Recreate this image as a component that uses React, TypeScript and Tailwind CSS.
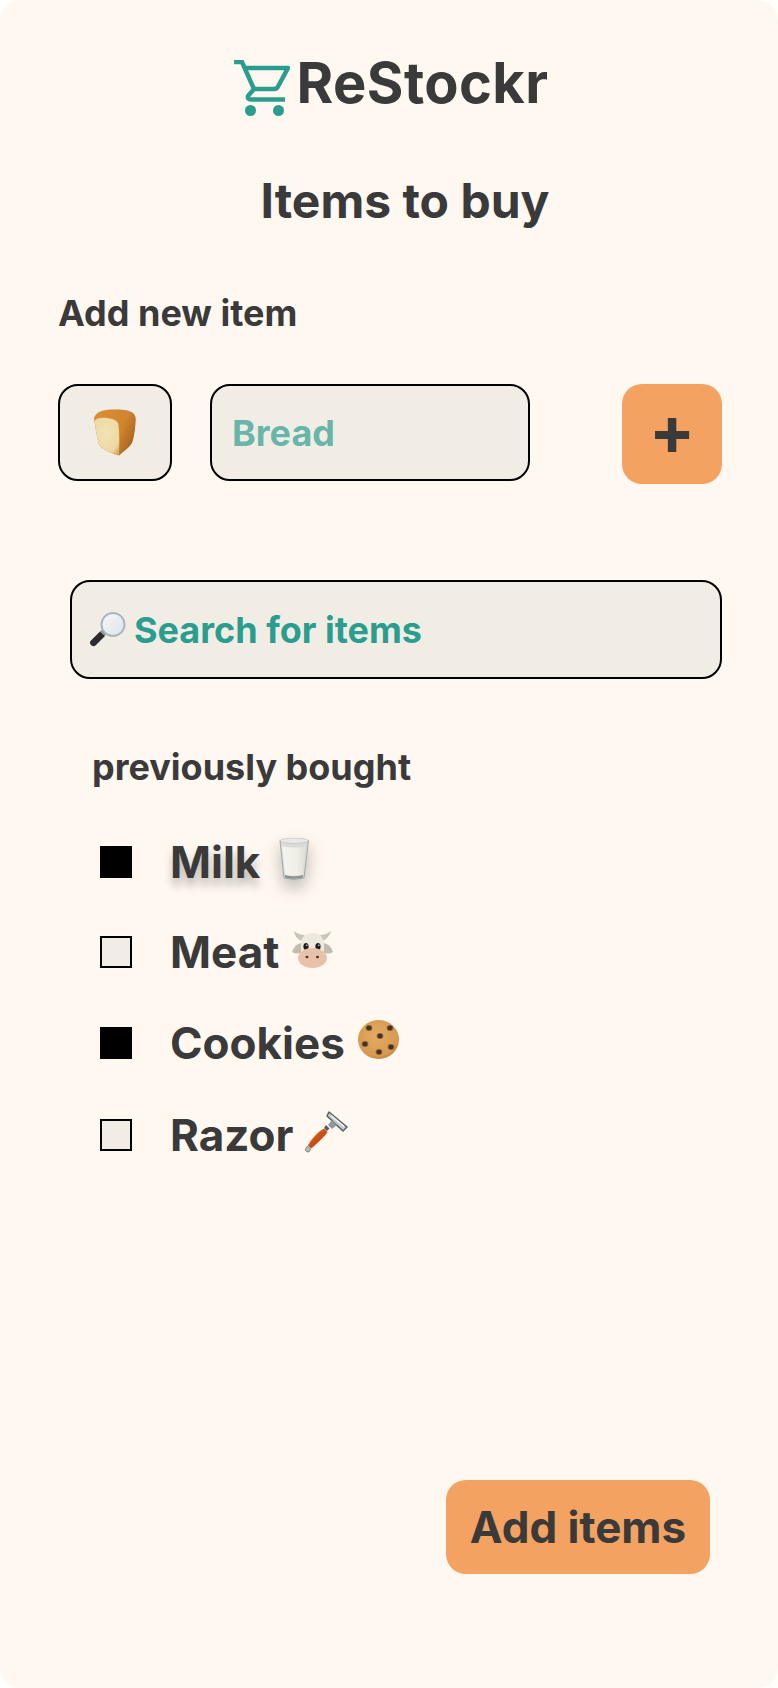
import React from 'react';

const inter = { fontFamily: 'Inter, "Liberation Sans", sans-serif' };

function CartLogo() {
  return (
    <svg width="56" height="56" viewBox="17 20 56 56" fill="none" className="shrink-0">
      <path d="M17 22H25L37 49" stroke="#2A9D8F" strokeWidth="4.5" />
      <path d="M28 28H71L61 46.5Q60 49 57 49H37L31 56Q30 59.5 34 59.5H68" stroke="#2A9D8F" strokeWidth="4.5" strokeLinejoin="round" />
      <circle cx="33.5" cy="70.5" r="5.5" fill="#2A9D8F" />
      <circle cx="61.5" cy="70.5" r="5.5" fill="#2A9D8F" />
    </svg>
  );
}

function BreadEmoji() {
  return (
    <svg width="42" height="47" viewBox="9 10 42 47" className="shrink-0">
      <defs>
        <linearGradient id="crust" x1="0" y1="0" x2="1" y2="0.5">
          <stop offset="0" stopColor="#DB8F38" />
          <stop offset="0.7" stopColor="#D0842E" />
          <stop offset="1" stopColor="#AD6820" />
        </linearGradient>
        <radialGradient id="crumb" cx="0.45" cy="0.4" r="0.7">
          <stop offset="0" stopColor="#F3E3B6" />
          <stop offset="0.8" stopColor="#ECD8A2" />
          <stop offset="1" stopColor="#D9AF6B" />
        </radialGradient>
      </defs>
      <path d="M9 19C11 13 17 11 26 10.500C36 10 47 11 49 15C51 18 51 20 50.500 24C50 31 49 39 47 44C44 49 38 53 34 56.500C25 54 17 50 14 46C12 38 10 27 9 19Z" fill="url(#crust)" />
      <path d="M9.500 22C11 19 16 18 22 19C28 20 33 21 33.500 26C34.500 34 34.500 46 34 56C25 54 17 50 14 46C12 38 10.500 29 9.500 22Z" fill="url(#crumb)" />
    </svg>
  );
}

function SearchEmoji() {
  return (
    <svg width="37" height="35" viewBox="0 0 37 35" className="shrink-0">
      <defs>
        <linearGradient id="lens" x1="0" y1="0" x2="1" y2="1">
          <stop offset="0" stopColor="#F8F8F8" />
          <stop offset="1" stopColor="#DCE3E6" />
        </linearGradient>
      </defs>
      <path d="M1.5 29L11 19.5L16 24L6.5 33.5Q4.5 35 2.5 33.5Q0 31 1.5 29Z" fill="#2C2C2E" />
      <path d="M11 19.5L14 17L18 21L16 24Z" fill="#8A8D90" />
      <circle cx="24" cy="12.5" r="11.5" fill="url(#lens)" stroke="#A9B6BF" strokeWidth="2" />
    </svg>
  );
}

function MilkEmoji() {
  return (
    <svg width="30" height="42" viewBox="7 6 30 42" className="shrink-0">
      <defs>
        <linearGradient id="milk" x1="0" y1="0" x2="1" y2="0">
          <stop offset="0" stopColor="#F4F3EC" />
          <stop offset="0.6" stopColor="#F0EFE8" />
          <stop offset="1" stopColor="#D9D9D2" />
        </linearGradient>
      </defs>
      <path d="M8 8.500L12 46Q22 49 32 46L36.500 8.500Z" fill="#D9DBD8" stroke="#A4A8A5" strokeWidth="1" />
      <path d="M10 14Q22 17 34.500 14L31 42.500Q22 45 13 42.500Z" fill="url(#milk)" />
      <path d="M13 43Q22 45.500 31 43L31 45.500Q22 48 13 45.500Z" fill="#8F9390" />
      <ellipse cx="22.200" cy="8.800" rx="14" ry="2.600" fill="#E9EAE8" stroke="#BEC1BE" strokeWidth="0.700" />
    </svg>
  );
}

function CowEmoji() {
  return (
    <svg width="41" height="37" viewBox="6 6 41 37" className="shrink-0">
      <path d="M8 6Q13 10 19 10L15 16Q9 13 8 6Z" fill="#C9C5B8" />
      <path d="M45 6Q40 10 34 10L37 16Q43 13 45 6Z" fill="#C9C5B8" />
      <path d="M6 27Q9 18 17 18L17 27Q11 30 6 27Z" fill="#C2BCAE" />
      <path d="M47 27Q44 18 36 18L36 27Q42 30 47 27Z" fill="#C2BCAE" />
      <path d="M15 21C15 12 19 8 26.500 8C34 8 38 12 38 21L38 38H15Z" fill="#ECE9DF" />
      <ellipse cx="20" cy="21.500" rx="2.600" ry="3.600" fill="#1E1B1A" />
      <ellipse cx="32" cy="21.500" rx="2.600" ry="3.600" fill="#1E1B1A" />
      <circle cx="20.800" cy="20.300" r="0.800" fill="#F4F4F4" />
      <circle cx="32.800" cy="20.300" r="0.800" fill="#F4F4F4" />
      <ellipse cx="26.500" cy="33" rx="14.500" ry="10" fill="#E7C1A9" />
      <ellipse cx="21" cy="32" rx="1.500" ry="1.200" fill="#4A322A" />
      <ellipse cx="31.500" cy="32" rx="1.500" ry="1.200" fill="#4A322A" />
    </svg>
  );
}

function CookieEmoji() {
  const chips = [
    [16, 13], [37, 13], [27, 21], [12, 29], [38, 32], [26, 37],
  ];
  return (
    <svg width="41" height="39" viewBox="5 5 41 39" className="shrink-0">
      <defs>
        <radialGradient id="dough" cx="0.45" cy="0.4" r="0.65">
          <stop offset="0" stopColor="#E3AD63" />
          <stop offset="0.8" stopColor="#D6994F" />
          <stop offset="1" stopColor="#BB7C33" />
        </radialGradient>
      </defs>
      <ellipse cx="25.500" cy="24.500" rx="20.500" ry="19.500" fill="url(#dough)" />
      {chips.map(([cx, cy]) => (
        <g key={`${cx}-${cy}`}>
          <ellipse cx={cx} cy={cy} rx="3.400" ry="3" fill="#8E6740" />
          <ellipse cx={cx} cy={cy} rx="2.500" ry="2.200" fill="#43312A" />
        </g>
      ))}
    </svg>
  );
}

function RazorEmoji() {
  return (
    <svg width="43" height="42" viewBox="5 5 43 42" className="shrink-0">
      <defs>
        <linearGradient id="handle" x1="0" y1="0" x2="1" y2="1">
          <stop offset="0" stopColor="#E8671F" />
          <stop offset="1" stopColor="#A83A0C" />
        </linearGradient>
      </defs>
      <path d="M29 6L47 21L43 25L27 10Z" fill="#C6CDCE" stroke="#566064" strokeWidth="1.500" strokeLinejoin="round" />
      <path d="M31 9.500L44 20.500" stroke="#F0F3F3" strokeWidth="1.500" />
      <path d="M32 14L37 19L32 23L28 19Z" fill="#8F989A" />
      <path d="M26 19L29.500 22.500L27 25L24 22Z" fill="#59595A" />
      <path d="M24 22.500L27.500 26C25 30 17 38 11 42.500L8 39.500C11 33 19 25 24 22.500Z" fill="url(#handle)" />
      <path d="M7.500 40L10.500 43L9 46Q6.500 46 5.500 44.500Q5 42.500 7.500 40Z" fill="#B9BFC0" stroke="#5F6669" strokeWidth="0.700" />
    </svg>
  );
}

const items = [
  { name: 'Milk', checked: true, shadow: true, emoji: <MilkEmoji />, gap: 'ml-[19px]', row: 'h-[90px]' },
  { name: 'Meat', checked: false, shadow: false, emoji: <CowEmoji />, gap: 'ml-[13px]', row: 'h-[90px]' },
  { name: 'Cookies', checked: true, shadow: false, emoji: <CookieEmoji />, gap: 'ml-[13px]', row: 'h-[91px]' },
  { name: 'Razor', checked: false, shadow: false, emoji: <RazorEmoji />, gap: 'ml-[12px]', row: 'h-[93px]' },
];

export default function App() {
  return (
    <div className="flex h-[1688px] w-[778px] flex-col overflow-hidden rounded-[20px] bg-[#FFF8F1] text-[#3A3A3A]" style={inter}>
      <div className="mt-[59px] flex items-center justify-center gap-[7px] pl-[4px]">
        <CartLogo />
        <h1 className="-mt-[10px] text-[56px] leading-[68px] font-bold tracking-[0.4px]">ReStockr</h1>
      </div>

      <h2 className="mt-[55px] pl-8 text-center text-[48px] leading-[58px] font-bold">Items to buy</h2>

      <p className="mt-[61px] pl-[58px] text-[36px] leading-[44px] font-bold">Add new item</p>

      <div className="mt-[49px] flex items-start pr-[56px] pl-[58px]">
        <div className="flex h-[97px] w-[114px] items-center justify-center rounded-[20px] border-2 border-black bg-[#F1EDE5]">
          <BreadEmoji />
        </div>
        <div className="ml-[38px] flex h-[97px] w-[320px] items-center rounded-[20px] border-2 border-black bg-[#F1EDE5] pl-[20px] text-[36px] font-bold text-[#2A9D8F]/70">
          Bread
        </div>
        <button className="ml-auto flex h-[100px] w-[100px] items-center justify-center rounded-[20px] bg-[#F4A261] pb-[8px] text-[68px] leading-none font-bold">
          +
        </button>
      </div>

      <div className="mt-[96px] mr-[56px] ml-[70px] flex h-[99px] items-center gap-[8px] rounded-[20px] border-2 border-black bg-[#F1EDE5] pl-[17px] text-[36px] font-bold text-[#2A9D8F]">
        <SearchEmoji />
        <span>Search for items</span>
      </div>

      <p className="mt-[66px] pl-[92px] text-[36px] leading-[44px] font-bold">previously bought</p>

      <ul className="mt-[28px] pl-[100px]">
        {items.map((item) => (
          <li key={item.name} className={`flex items-center ${item.row}`}>
            <span className={`h-[32px] w-[32px] shrink-0 ${item.checked ? 'bg-black' : 'border-2 border-black bg-[#F1EDE5]'}`} />
            <span className={`ml-[38px] text-[44px] leading-[54px] font-bold ${item.shadow ? '[text-shadow:0_8px_8px_rgba(0,0,0,0.25)]' : ''}`}>
              {item.name}
            </span>
            <span className={`${item.gap} -mt-[6px] ${item.shadow ? 'drop-shadow-[0_8px_8px_rgba(0,0,0,0.25)]' : ''}`}>
              {item.emoji}
            </span>
          </li>
        ))}
      </ul>

      <button className="mt-auto mr-[68px] mb-[114px] ml-auto flex h-[94px] w-[264px] items-center justify-center rounded-[20px] bg-[#F4A261] text-[44px] leading-[54px] font-bold">
        Add items
      </button>
    </div>
  );
}
